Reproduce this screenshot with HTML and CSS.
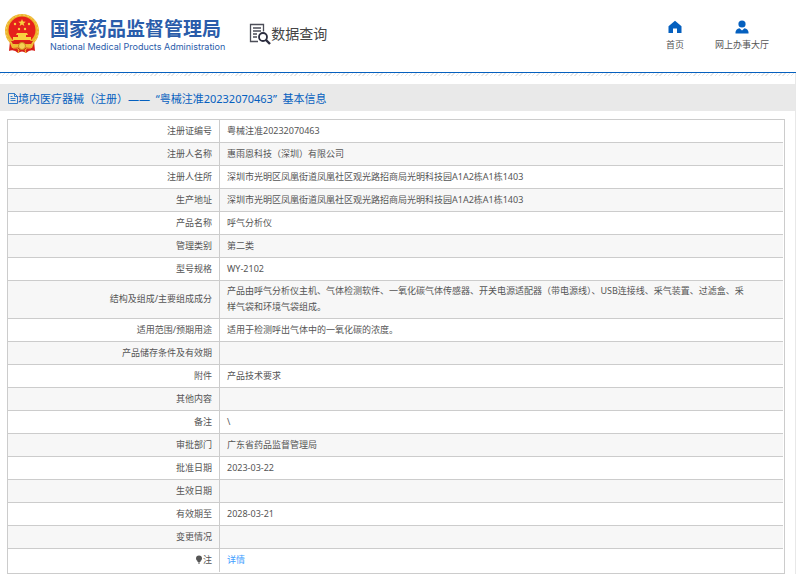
FILE: index.html
```
<!DOCTYPE html>
<html lang="zh-CN">
<head>
  <meta charset="UTF-8">
  <meta name="viewport" content="width=device-width, initial-scale=1.0">
  <title>国家药品监督管理局 数据查询</title>
  <link rel="stylesheet" href="styles.css">
</head>
<body>
  <header class="header">
    <a class="logo" href="#">
      <svg class="emblem" viewBox="0 0 36 40" aria-hidden="true">
        <path d="M6 27L5 37Q10 35 14 39Q18 36 22 39Q26 35 31 37L30 27Z" fill="#d8201a"/>
        <circle cx="18" cy="17" r="17" fill="#edb52c"/>
        <circle cx="18" cy="17" r="16" fill="none" stroke="#f6d36a" stroke-dasharray="2 2"/>
        <circle cx="18" cy="16" r="13.5" fill="#e5201b"/>
        <path d="M18 5l1 2.600 2.800.1-2.200 1.700.8 2.700-2.400-1.600-2.400 1.600.8-2.700-2.200-1.700 2.800-.1z" fill="#f8cf3f"/>
        <g fill="#f8cf3f">
          <circle cx="11" cy="10" r="1.200"/>
          <circle cx="25" cy="10" r="1.200"/>
          <circle cx="15" cy="15" r="1.200"/>
          <circle cx="21" cy="15" r="1.200"/>
          <path d="M13 19h10l1 2h-2v2h5v3H9v-3h5v-2h-2z"/>
        </g>
        <path d="M7 27h22l-2 3H9z" fill="#d8201a"/>
        <path d="M6 29q6 4 12 0q6 4 12 0l-2 5q-5 0-10-2q-5 2-10 2z" fill="#efbd35"/>
        <circle cx="18" cy="32" r="3.500" fill="#f5cf55" stroke="#c98b18"/>
        <path d="M9 34q4-1 6 2l-1 3M27 34q-4-1-6 2l1 3" fill="none" stroke="#f1b72c" stroke-width="1"/>
      </svg>
      <span class="logo-text">
        <strong>国家药品监督管理局</strong>
        <span>National Medical Products Administration</span>
      </span>
    </a>
    <div class="section-name">
      <svg viewBox="0 0 22 22" aria-hidden="true">
        <path d="M9 18.500H1.500V1.500h13v7" fill="none" stroke="#4c4e58" stroke-width="1.300"/>
        <path d="M4 5h8M4 8h8M4 11h4M4 14h4" stroke="#4c4e58" stroke-width="1.300"/>
        <circle cx="14" cy="14" r="4" fill="#fff" stroke="#2b2d3f" stroke-width="1.800"/>
        <path d="M17 17l4 4" stroke="#2b2d3f" stroke-width="2.400"/>
      </svg>
      <span>数据查询</span>
    </div>
    <nav class="nav">
      <a href="#">
        <svg viewBox="0 0 14 14" aria-hidden="true"><path d="M7 .8L13.500 6.200V13H9V8.500H5V13H.5V6.200z" fill="#0560bf"/></svg>
        <span>首页</span>
      </a>
      <a href="#">
        <svg viewBox="0 0 14 14" aria-hidden="true"><circle cx="7" cy="4" r="3.600" fill="#0560bf"/><path d="M.5 13.500V12Q1 9 4.500 8.200L7 10.500 9.500 8.200Q13 9 13.500 12v1.500z" fill="#0560bf"/></svg>
        <span>网上办事大厅</span>
      </a>
    </nav>
  </header>

  <main class="content">
    <h1 class="title">
      <svg viewBox="0 0 10 12" aria-hidden="true"><path d="M.5 1.500h6l3 3v7h-9zM6.500 1.500v3h3M2.500 4.500h2M2.500 6.500h5M2.500 8.500h5" fill="none" stroke="#0560bf" stroke-width=".8"/></svg>
      <span>境内医疗器械（注册）——&nbsp; “粤械注准20232070463”&nbsp; 基本信息</span>
    </h1>

    <div class="table-box">
      <table class="info">
        <tbody>
          <tr><th scope="row">注册证编号</th><td>粤械注准20232070463</td></tr>
          <tr><th scope="row">注册人名称</th><td>惠雨恩科技（深圳）有限公司</td></tr>
          <tr><th scope="row">注册人住所</th><td>深圳市光明区凤凰街道凤凰社区观光路招商局光明科技园A1A2栋A1栋1403</td></tr>
          <tr><th scope="row">生产地址</th><td>深圳市光明区凤凰街道凤凰社区观光路招商局光明科技园A1A2栋A1栋1403</td></tr>
          <tr><th scope="row">产品名称</th><td>呼气分析仪</td></tr>
          <tr><th scope="row">管理类别</th><td>第二类</td></tr>
          <tr><th scope="row">型号规格</th><td>WY-2102</td></tr>
          <tr><th scope="row">结构及组成/主要组成成分</th><td>产品由呼气分析仪主机、气体检测软件、一氧化碳气体传感器、开关电源适配器（带电源线）、USB连接线、采气装置、过滤盒、采样气袋和环境气袋组成。</td></tr>
          <tr><th scope="row">适用范围/预期用途</th><td>适用于检测呼出气体中的一氧化碳的浓度。</td></tr>
          <tr><th scope="row">产品储存条件及有效期</th><td></td></tr>
          <tr><th scope="row">附件</th><td>产品技术要求</td></tr>
          <tr><th scope="row">其他内容</th><td></td></tr>
          <tr><th scope="row">备注</th><td>\</td></tr>
          <tr><th scope="row">审批部门</th><td>广东省药品监督管理局</td></tr>
          <tr><th scope="row">批准日期</th><td>2023-03-22</td></tr>
          <tr><th scope="row">生效日期</th><td></td></tr>
          <tr><th scope="row">有效期至</th><td>2028-03-21</td></tr>
          <tr><th scope="row">变更情况</th><td></td></tr>
          <tr>
            <th scope="row"><svg class="bulb" viewBox="0 0 8 9" aria-hidden="true"><path d="M4 .5a3 3 0 0 1 3 3q0 1.500-1.500 2.500v1h-3V6Q1 5 1 3.500a3 3 0 0 1 3-3zM3 7.500h2v1H3z" fill="#555"/></svg>注</th>
            <td><a href="#">详情</a></td>
          </tr>
        </tbody>
      </table>
    </div>
  </main>
</body>
</html>
```
FILE: styles.css
```
* {
  box-sizing: border-box;
}

body {
  margin: 0;
  font-family: "Noto Sans", "Noto Sans CJK SC", sans-serif;
  font-size: 9px;
  color: #555;
  background: #fff;
}

a {
  color: inherit;
  text-decoration: none;
}

svg {
  display: block;
  flex: none;
}

/* header */
.header {
  display: flex;
  align-items: flex-start;
  height: 73px;
  padding: 14px 27px 0 4px;
  border-bottom: 1px solid #0560bf;
}

.logo {
  display: flex;
  gap: 10px;
  color: #2a5caa;
}

.emblem {
  width: 36px;
  height: 40px;
}

.logo-text {
  display: flex;
  flex-direction: column;
  padding-top: 2px;
  white-space: nowrap;
}

.logo-text strong {
  font-family: "Noto Sans CJK SC", sans-serif;
  font-size: 19px;
  line-height: 24px;
}

.logo-text span {
  font-family: Inter, "Liberation Sans", sans-serif;
  font-size: 9px;
  line-height: 14px;
}

.section-name {
  display: flex;
  margin-left: 24px;
  padding-top: 8px;
  font-family: "Noto Sans CJK SC", sans-serif;
  font-size: 14px;
  line-height: 22px;
  color: #444;
  white-space: nowrap;
}

.section-name svg {
  width: 22px;
  height: 24px;
}

.nav {
  display: flex;
  gap: 31px;
  margin-left: auto;
  padding-top: 6px;
}

.nav a {
  display: flex;
  flex-direction: column;
  align-items: center;
  gap: 4px;
  line-height: 14px;
  white-space: nowrap;
}

.nav svg {
  width: 14px;
  height: 14px;
}

/* content */
.content {
  padding-top: 11px;
  border-right: 1px solid #e8e8e8;
  background: repeating-linear-gradient(135deg, #e6e6e6 0 1px, #fff 1px 3px) 0 0 / 100% 3px no-repeat;
}

.title {
  display: flex;
  align-items: center;
  height: 27px;
  margin: 0;
  padding: 0 8px;
  font-size: 11px;
  font-weight: normal;
  color: #0560bf;
  background: #e9e9e9;
}

.title svg {
  width: 10px;
  height: 12px;
}

.table-box {
  margin: 8px 10px 8px 7px;
  padding: 0 1px 1px 0;
  border: 1px solid #ccc;
}

.info {
  width: 100%;
  border-spacing: 0;
  line-height: 16px;
}

.info th,
.info td {
  height: 23px;
  padding: 2px 7px 3px;
  border-bottom: 1px solid #ccc;
}

.info th {
  width: 212px;
  border-right: 1px solid #ccc;
  font-weight: normal;
  text-align: right;
}

.info td {
  padding-right: 36px;
}

.info tr:nth-child(even) {
  background: #f7f7f7;
}

.info tr:last-child th,
.info tr:last-child td {
  border-bottom: 0;
}

.info a {
  color: #409eff;
}

.bulb {
  display: inline-block;
  width: 8px;
  height: 9px;
  vertical-align: -1px;
}
```
